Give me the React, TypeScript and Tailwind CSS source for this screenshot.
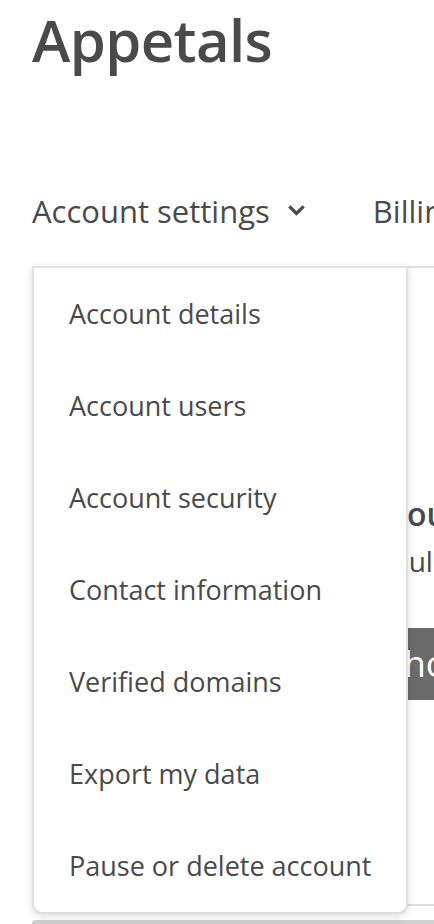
import React from "react";

const items = [
  "Account details",
  "Account users",
  "Account security",
  "Contact information",
  "Verified domains",
  "Export my data",
  "Pause or delete account",
];

export default function App() {
  return (
    <div className="w-[434px] h-[924px] overflow-hidden bg-white relative font-['Open_Sans',sans-serif] text-[#4a4a4a]">
      <div className="pl-8 w-[900px]">
        <h1 className="text-[58px] leading-[80px] font-semibold tracking-[-0.6px]">Appetals</h1>
        <nav className="mt-[111px] h-[40px] flex items-center whitespace-nowrap text-[31px]">
          <span>Account settings</span>
          <svg className="ml-[18px]" width="17" height="12" viewBox="0 0 17 12" fill="none">
            <polyline points="2.5,2.5 8.5,8.5 14.5,2.5" stroke="#4a4a4a" strokeWidth="3.2" strokeLinecap="square" />
          </svg>
          <span className="ml-[68px]">Billing</span>
        </nav>
        <div className="mt-[35px] relative h-[654px]">
          <div className="border-2 border-[#e0e0e0] w-[800px] h-[640px] pl-[332px] pt-[226px] whitespace-nowrap">
            <h2 className="text-[32px] leading-[40px] font-semibold">About your account</h2>
            <p className="mt-[7px] text-[28px] leading-[40px]">Would you like to pause your account?</p>
            <div className="mt-[47px] h-[72px] inline-flex items-center pl-[18px] pr-[26px] bg-[#6b6b6b] text-white text-[36px]">
              Show options
            </div>
          </div>
          <div className="absolute left-0 top-0 w-[376px] bg-white border-2 border-[#e0e0e0] rounded-b-[10px] shadow-[0_2px_8px_rgba(0,0,0,0.15)]">
            {items.map((t) => (
              <div key={t} className="h-[92px] flex items-center pl-[35px] text-[27px] font-medium whitespace-nowrap">
                {t}
              </div>
            ))}
          </div>
        </div>
        <div className="h-[20px] w-[800px] bg-[#cfcfcf] rounded-tl-[3px]" />
      </div>
    </div>
  );
}
